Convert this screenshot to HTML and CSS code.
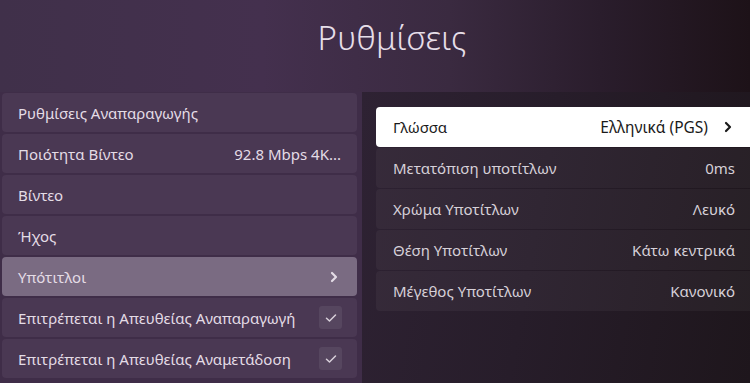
FILE: index.html
```html
<!DOCTYPE html>
<html lang="el">
  <head>
    <meta charset="utf-8" />
    <meta name="viewport" content="width=device-width, initial-scale=1" />
    <title>Ρυθμίσεις</title>
    <link rel="stylesheet" href="styles.css">
  </head>
  <body>
    <div class="screen">
      <h1 class="title">Ρυθμίσεις</h1>
      <div class="panes">
        <div class="menu">
          <div class="row"><span>Ρυθμίσεις Αναπαραγωγής</span></div>
          <div class="row"><span>Ποιότητα Βίντεο</span><span class="value">92.8 Mbps 4K...</span></div>
          <div class="row"><span>Βίντεο</span></div>
          <div class="row"><span>Ήχος</span></div>
          <div class="row active">
            <span>Υπότιτλοι</span>
            <svg class="chev" viewBox="0 0 10 12"><path d="M3 2l4 4-4 4" /></svg>
          </div>
          <div class="row">
            <span>Επιτρέπεται η Απευθείας Αναπαραγωγή</span>
            <span class="check"><svg viewBox="0 0 12 10"><path d="M1.5 5.2l3 2.8 6-6" /></svg></span>
          </div>
          <div class="row">
            <span>Επιτρέπεται η Απευθείας Αναμετάδοση</span>
            <span class="check"><svg viewBox="0 0 12 10"><path d="M1.5 5.2l3 2.8 6-6" /></svg></span>
          </div>
        </div>
        <div class="sub">
          <div class="row focus">
            <span>Γλώσσα</span>
            <span class="value">Ελληνικά (PGS)</span>
            <svg class="chev" viewBox="0 0 10 12"><path d="M3 2l4 4-4 4" /></svg>
          </div>
          <div class="row"><span>Μετατόπιση υποτίτλων</span><span class="value">0ms</span></div>
          <div class="row"><span>Χρώμα Υποτίτλων</span><span class="value">Λευκό</span></div>
          <div class="row"><span>Θέση Υποτίτλων</span><span class="value">Κάτω κεντρικά</span></div>
          <div class="row"><span>Μέγεθος Υποτίτλων</span><span class="value">Κανονικό</span></div>
        </div>
      </div>
    </div>
  </body>
</html>
```

FILE: styles.css
```css
:root {
  --text: #e4dce6;
  --row: #4a3853;
  --row-active: #7a6b82;
  --row-dark: #2f2632;
}

* {
  box-sizing: border-box;
}

body {
  margin: 0;
  font-family: "Noto Sans", sans-serif;
  color: var(--text);
  background: #2a1f2e;
}

.screen {
  width: 750px;
  height: 383px;
  overflow: hidden;
  background: linear-gradient(90deg, #40304a 0%, #44304e 35%, #3a2a40 60%, #2a1d2c 80%, #1d1218 100%);
}

.title {
  margin: 0;
  height: 92px;
  padding: 15px 0 0 34px;
  text-align: center;
  font-size: 33px;
  font-weight: 300;
  letter-spacing: 0.3px;
  color: #e6dee8;
}

.panes {
  display: grid;
  grid-template-columns: 362px 1fr;
  height: 291px;
}

.menu {
  background: #3f2d48;
  padding: 1px 5px 0 2px;
  display: flex;
  flex-direction: column;
  gap: 2px;
}

.sub {
  background: linear-gradient(100deg, #2e2233 0%, #271d2a 45%, #1e161c 100%);
  padding: 15px 0 0 14px;
  display: flex;
  flex-direction: column;
  gap: 1px;
}

.row {
  flex-shrink: 0;
  height: 39px;
  display: flex;
  align-items: center;
  gap: 12px;
  padding: 0 16px;
  border-radius: 4px;
  background: var(--row);
  font-size: 15px;
}

.row .value {
  margin-left: auto;
  white-space: nowrap;
}

.row.active {
  background: var(--row-active);
  justify-content: space-between;
  padding-right: 18px;
}

.menu .row .check {
  margin-left: auto;
  margin-right: -1px;
  width: 23px;
  height: 23px;
  border-radius: 3px;
  background: rgba(255, 255, 255, 0.07);
  display: flex;
  align-items: center;
  justify-content: center;
}

.check svg {
  width: 12px;
  height: 10px;
  fill: none;
  stroke: #d8d0da;
  stroke-width: 1.5;
  stroke-linecap: round;
  stroke-linejoin: round;
}

.chev {
  width: 10px;
  height: 12px;
  fill: none;
  stroke: currentColor;
  stroke-width: 2.2;
  stroke-linecap: round;
  stroke-linejoin: round;
}

.sub .row {
  height: 40px;
  background: rgba(255, 255, 255, 0.045);
  border-radius: 4px 0 0 4px;
  padding: 0 15px 0 17px;
  color: #d6d0d8;
}

.sub .row.focus {
  background: #fff;
  color: #1a1a1a;
  padding-right: 17px;
  gap: 0;
}

.focus .value {
  font-size: 15.5px;
}

.focus .chev {
  margin-left: 15px;
}
```
